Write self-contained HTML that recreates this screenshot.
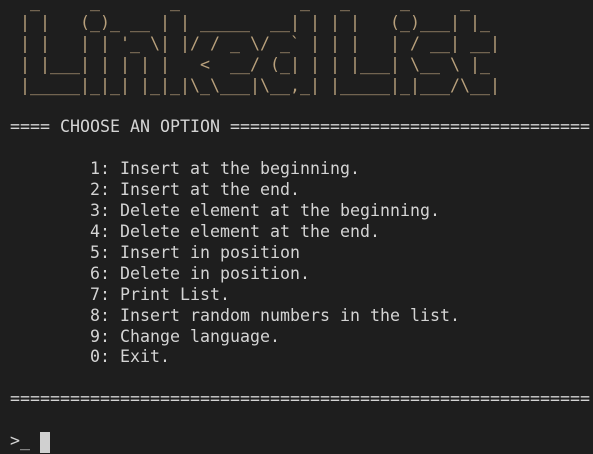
<!DOCTYPE html>
<html><head><meta charset="utf-8"><style>
html,body{margin:0;padding:0;background:#1e1e1e;width:593px;height:454px;overflow:hidden}
pre{position:absolute;left:10px;top:-8px;margin:0;font-family:"DejaVu Sans Mono","Liberation Mono",monospace;font-size:16.61px;line-height:20.9px;color:#d4d4d4;white-space:pre}
.a{color:#b8a07c}
.cur{display:inline-block;width:10px;height:21px;background:#d0d0d0;vertical-align:top;margin-top:1px}
</style></head><body>
<pre><span class="a">  _     _       _            _   _     _     _   
 | |   (_)_ __ | | _____  __| | | |   (_)___| |_ 
 | |   | | '_ \| |/ / _ \/ _` | | |   | / __| __|
 | |___| | | | |   &lt;  __/ (_| | | |___| \__ \ |_ 
 |_____|_|_| |_|_|\_\___|\__,_| |_____|_|___/\__|</span>

==== CHOOSE AN OPTION ====================================

        1: Insert at the beginning.
        2: Insert at the end.
        3: Delete element at the beginning.
        4: Delete element at the end.
        5: Insert in position
        6: Delete in position.
        7: Print List.
        8: Insert random numbers in the list.
        9: Change language.
        0: Exit.

==========================================================

&gt;_ <span class="cur"></span></pre>
</body></html>
